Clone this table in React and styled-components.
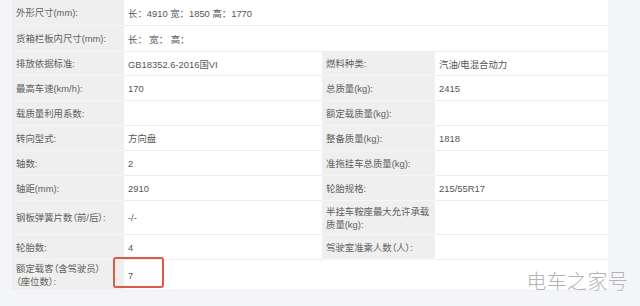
import React from 'react';
import styled, { createGlobalStyle } from 'styled-components';

const GlobalStyle = createGlobalStyle`
  html, body {
    margin: 0;
    padding: 0;
    background: #f4f5f9;
  }
  body {
    font-family: "Liberation Sans", "Noto Sans CJK SC", sans-serif;
  }
`;

const Page = styled.div`
  position: relative;
  width: 640px;
  height: 306px;
  overflow: hidden;
  background: #f4f5f9;
`;

const Table = styled.div`
  margin-left: 12px;
  width: 596px;
  display: grid;
  grid-template-columns: 112px 198px 113px 173px;
  grid-template-rows: 26px 26px 24px 25px 25px 25px 25px 25px 34px 25px 31px;
  background: #fff;
`;

const Label = styled.div`
  display: flex;
  align-items: center;
  padding: 0 4px;
  background: #efefef;
  border-bottom: 1px solid #f6f6f6;
  color: #606060;
  font-size: 9.4px;
  line-height: 13px;
  white-space: nowrap;
  font-feature-settings: "palt";
`;

const Value = styled.div`
  position: relative;
  display: flex;
  align-items: center;
  padding: 0 4px;
  grid-column: span ${(p) => p.$span || 1};
  background: #fff;
  border-bottom: 1px solid #ececec;
  color: #555;
  font-size: 9.4px;
  white-space: pre;
`;

const Mark = styled.div`
  position: absolute;
  left: -11px;
  top: -3px;
  width: 51px;
  height: 31px;
  box-sizing: border-box;
  border: 2px solid #dd5a48;
  border-radius: 3px;
`;

const Watermark = styled.div`
  position: absolute;
  right: 12px;
  top: 271px;
  font-family: "Noto Sans CJK SC", sans-serif;
  font-size: 20px;
  font-weight: 300;
  line-height: 20px;
  color: #b3b3b3;
  letter-spacing: 0.3px;
  text-shadow: 0 0 1px #fff, 0 0 2px #fff;
`;

const rows = [
  [['外形尺寸(mm):', '长：4910 宽：1850 高：1770', 3]],
  [['货箱栏板内尺寸(mm):', '长： 宽： 高：', 3]],
  [['排放依据标准:', 'GB18352.6-2016国VI'], ['燃料种类:', '汽油/电混合动力']],
  [['最高车速(km/h):', '170'], ['总质量(kg):', '2415']],
  [['载质量利用系数:', ''], ['额定载质量(kg):', '']],
  [['转向型式:', '方向盘'], ['整备质量(kg):', '1818']],
  [['轴数:', '2'], ['准拖挂车总质量(kg):', '']],
  [['轴距(mm):', '2910'], ['轮胎规格:', '215/55R17']],
  [['钢板弹簧片数（前/后）:', '-/-'], [<>半挂车鞍座最大允许承载<br />质量(kg):</>, '']],
  [['轮胎数:', '4'], ['驾驶室准乘人数（人）:', '']],
];

export default function App() {
  return (
    <Page>
      <GlobalStyle />
      <Table>
        {rows.map((row, i) =>
          row.map(([label, value, span], j) => (
            <React.Fragment key={`${i}-${j}`}>
              <Label>{label}</Label>
              <Value $span={span}>{value}</Value>
            </React.Fragment>
          ))
        )}
        <Label>额定载客（含驾驶员）<br />（座位数）:</Label>
        <Value $span={3}>
          <Mark />
          7
        </Value>
      </Table>
      <Watermark>电车之家号</Watermark>
    </Page>
  );
}
